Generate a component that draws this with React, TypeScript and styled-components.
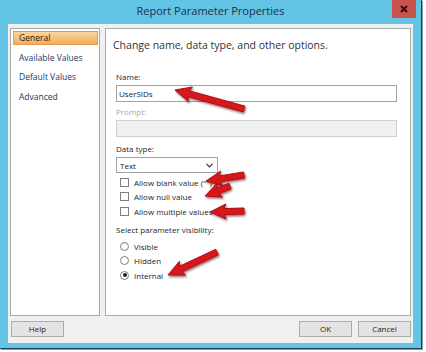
import styled, { createGlobalStyle } from "styled-components"

const GlobalStyle = createGlobalStyle`
  html, body { margin: 0; padding: 0; background: #ffffff; }
  body { width: 426px; height: 352px; overflow: hidden; font-family: "Open Sans", "Noto Sans", sans-serif; }
`

const Stage = styled.div`
  position: relative;
  width: 426px;
  height: 352px;
`

const Window = styled.div`
  width: 421px;
  height: 348px;
  background: #63c4e6;
  border-right: 1px solid #22404f;
  border-bottom: 1px solid #22404f;
  box-shadow: 1px 1px 0 #8c9aa2;
  display: flex;
  flex-direction: column;
`

const TitleBar = styled.div`
  height: 24px;
  display: grid;
  grid-template-columns: 1fr auto 1fr;
  align-items: start;
`

const Title = styled.div`
  grid-column: 2;
  font-size: 11px;
  line-height: 22px;
  color: #17324a;
`

const CloseBtn = styled.div`
  grid-column: 3;
  justify-self: end;
  margin-right: 5px;
  width: 24px;
  height: 18px;
  background: #c8534b;
  display: flex;
  align-items: center;
  justify-content: center;
`

const Client = styled.div`
  flex: 1;
  margin: 0 8px 5px 8px;
  background: #f0f0f0;
  padding: 4px 2px 6px 2px;
  display: flex;
  flex-direction: column;
  gap: 5px;
`

const Panels = styled.div`
  flex: 1;
  display: grid;
  grid-template-columns: 90px 1fr;
  gap: 5px;
`

const NavPanel = styled.div`
  background: #ffffff;
  border: 1px solid #a8a8a8;
  padding: 2px 1px 0 2px;
  display: flex;
  flex-direction: column;
  gap: 5.5px;
`

const NavItem = styled.div<{ $active?: boolean }>`
  height: 14px;
  line-height: 14px;
  padding-left: 6px;
  font-size: 8.5px;
  color: ${(p) => (p.$active ? "#2b2010" : "#1f3766")};
  background: ${(p) => (p.$active ? "linear-gradient(#fcd9a6, #f3a95a)" : "transparent")};
  box-shadow: ${(p) => (p.$active ? "inset 0 0 0 1px #e49a4e" : "none")};
`

const MainPanel = styled.div`
  background: #ffffff;
  border: 1px solid #a8a8a8;
  padding: 9px 13px 0 10px;
  display: flex;
  flex-direction: column;
`

const Heading = styled.div`
  margin-left: -3px;
  font-size: 10.5px;
  line-height: 14px;
  color: #333333;
`

const Label = styled.div<{ $disabled?: boolean; $top: number }>`
  margin-top: ${(p) => p.$top}px;
  font-size: 8px;
  line-height: 12px;
  color: ${(p) => (p.$disabled ? "#a6a6a6" : "#262626")};
`

const TextBox = styled.div<{ $disabled?: boolean }>`
  margin-top: 2px;
  height: 17px;
  box-sizing: border-box;
  border: 1px solid ${(p) => (p.$disabled ? "#cfcfcf" : "#a3a3a3")};
  background: ${(p) => (p.$disabled ? "#f0f0f0" : "#ffffff")};
  padding-left: 2px;
  font-size: 8px;
  line-height: 15px;
  color: #1a1a1a;
`

const Select = styled.div`
  margin-top: 2px;
  width: 102px;
  height: 16px;
  box-sizing: border-box;
  border: 1px solid #a3a3a3;
  padding: 0 4px 0 3px;
  display: flex;
  align-items: center;
  justify-content: space-between;
  font-size: 8px;
  color: #1a1a1a;
`

const OptionList = styled.div<{ $top: number }>`
  margin-top: ${(p) => p.$top}px;
  padding-left: 4px;
  display: flex;
  flex-direction: column;
`

const OptionRow = styled.div`
  height: 14.5px;
  display: flex;
  align-items: center;
  gap: 5px;
  font-size: 8px;
  color: #262626;
`

const CheckBox = styled.span`
  width: 9px;
  height: 9px;
  box-sizing: border-box;
  border: 1px solid #7d7d7d;
  background: #ffffff;
`

const Radio = styled.span<{ $checked?: boolean }>`
  width: 9px;
  height: 9px;
  box-sizing: border-box;
  border: 1px solid #7d7d7d;
  border-radius: 50%;
  background: #ffffff;
  display: flex;
  align-items: center;
  justify-content: center;
  &::after {
    content: "";
    width: 4px;
    height: 4px;
    border-radius: 50%;
    background: ${(p) => (p.$checked ? "#1e1e1e" : "transparent")};
  }
`

const ButtonRow = styled.div`
  height: 16px;
  display: flex;
  gap: 6px;
  padding-left: 1px;
`

const Button = styled.div`
  width: 53px;
  height: 16px;
  box-sizing: border-box;
  border: 1px solid #acacac;
  background: #e3e3e3;
  font-size: 8px;
  line-height: 14px;
  text-align: center;
  color: #1e1e1e;
`

const Spacer = styled.div`
  flex: 1;
`

const Overlay = styled.svg`
  position: absolute;
  left: 0;
  top: 0;
  pointer-events: none;
`

type Arrow = { x1: number; y1: number; x2: number; y2: number }

const arrows: Arrow[] = [
  { x1: 244, y1: 109, x2: 175, y2: 90 },
  { x1: 244, y1: 175, x2: 206, y2: 181 },
  { x1: 230, y1: 186, x2: 205, y2: 196 },
  { x1: 244, y1: 211, x2: 210, y2: 212 },
  { x1: 217, y1: 252, x2: 168, y2: 275 },
]

function arrowPoints(a: Arrow) {
  const dx = a.x2 - a.x1
  const dy = a.y2 - a.y1
  const len = Math.hypot(dx, dy)
  const ux = dx / len
  const uy = dy / len
  const nx = -uy
  const ny = ux
  const L = Math.min(14, len * 0.55)
  const W = 7.5
  const s = 3
  const bx = a.x2 - ux * L
  const by = a.y2 - uy * L
  const pts = [
    [a.x1 + nx * s, a.y1 + ny * s],
    [bx + nx * s, by + ny * s],
    [bx - ux * 2 + nx * W, by - uy * 2 + ny * W],
    [a.x2, a.y2],
    [bx - ux * 2 - nx * W, by - uy * 2 - ny * W],
    [bx - nx * s, by - ny * s],
    [a.x1 - nx * s, a.y1 - ny * s],
  ]
  return pts.map((p) => p[0].toFixed(1) + "," + p[1].toFixed(1)).join(" ")
}

function App() {
  return (
    <>
      <GlobalStyle />
      <Stage>
        <Window>
          <TitleBar>
            <Title>Report Parameter Properties</Title>
            <CloseBtn>
              <svg width="8" height="8" viewBox="0 0 8 8">
                <path d="M1 1 L7 7 M7 1 L1 7" stroke="#3a0d0d" strokeWidth="2" />
              </svg>
            </CloseBtn>
          </TitleBar>
          <Client>
            <Panels>
              <NavPanel>
                <NavItem $active>General</NavItem>
                <NavItem>Available Values</NavItem>
                <NavItem>Default Values</NavItem>
                <NavItem>Advanced</NavItem>
              </NavPanel>
              <MainPanel>
                <Heading>Change name, data type, and other options.</Heading>
                <Label $top={19}>Name:</Label>
                <TextBox>UserSIDs</TextBox>
                <Label $top={4} $disabled>Prompt:</Label>
                <TextBox $disabled />
                <Label $top={6}>Data type:</Label>
                <Select>
                  <span>Text</span>
                  <svg width="7" height="5" viewBox="0 0 7 5">
                    <path d="M0.5 0.8 L3.5 3.8 L6.5 0.8" stroke="#333" strokeWidth="1.2" fill="none" />
                  </svg>
                </Select>
                <OptionList $top={2}>
                  <OptionRow><CheckBox />Allow blank value (&quot;&quot;)</OptionRow>
                  <OptionRow><CheckBox />Allow null value</OptionRow>
                  <OptionRow><CheckBox />Allow multiple values</OptionRow>
                </OptionList>
                <Label $top={5.5}>Select parameter visibility:</Label>
                <OptionList $top={3}>
                  <OptionRow><Radio />Visible</OptionRow>
                  <OptionRow><Radio />Hidden</OptionRow>
                  <OptionRow><Radio $checked />Internal</OptionRow>
                </OptionList>
              </MainPanel>
            </Panels>
            <ButtonRow>
              <Button>Help</Button>
              <Spacer />
              <Button>OK</Button>
              <Button>Cancel</Button>
            </ButtonRow>
          </Client>
        </Window>
        <Overlay width="426" height="352" viewBox="0 0 426 352">
          <defs>
            <filter id="shadow" x="-20%" y="-20%" width="140%" height="160%">
              <feDropShadow dx="1" dy="1.5" stdDeviation="1" floodColor="#3a0000" floodOpacity="0.6" />
            </filter>
          </defs>
          {arrows.map((a, i) => (
            <polygon
              key={i}
              points={arrowPoints(a)}
              fill="#d8181c"
              stroke="#b10f13"
              strokeWidth="1"
              strokeLinejoin="round"
              filter="url(#shadow)"
            />
          ))}
        </Overlay>
      </Stage>
    </>
  )
}

export default App
